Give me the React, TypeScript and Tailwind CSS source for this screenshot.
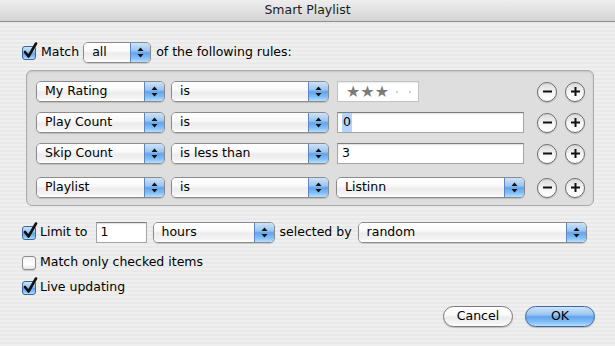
import React from "react";

const whiteGloss =
  "bg-[linear-gradient(to_bottom,#ffffff_0%,#fafafa_40%,#ececec_55%,#f4f4f4_85%,#ffffff_100%)]";
const blueGloss =
  "bg-[linear-gradient(to_bottom,#cde3f9_0%,#9cc6f1_40%,#62a4ec_52%,#83c0f8_80%,#b9e0ff_100%)]";

function Arrows() {
  return (
    <svg width="7" height="11" viewBox="0 0 7 11">
      <path d="M3.5 0.5 L6.5 4 H0.5 Z" fill="#111" />
      <path d="M0.5 7 H6.5 L3.5 10.5 Z" fill="#111" />
    </svg>
  );
}

function Popup({ label, className }: { label: string; className: string }) {
  return (
    <div
      className={`flex h-[21px] shrink-0 overflow-hidden rounded-[5px] border border-[#8b8b8b] shadow-[0_1px_1px_rgba(0,0,0,0.15)] ${className}`}
    >
      <div className={`flex flex-1 items-center pl-[8px] ${whiteGloss}`}>{label}</div>
      <div className={`flex w-[20px] items-center justify-center border-l border-[#5d86c0] ${blueGloss}`}>
        <Arrows />
      </div>
    </div>
  );
}

function Check({ on }: { on?: boolean }) {
  return (
    <div className="relative h-[14px] w-[14px] shrink-0">
      <div
        className={
          on
            ? `h-full w-full rounded-[3px] border border-[#3e64a0] ${blueGloss}`
            : "h-full w-full rounded-[3px] border border-[#8c8c8c] bg-[linear-gradient(to_bottom,#f2f2f2,#ffffff_60%,#e6e6e6)] shadow-[0_1px_1px_rgba(0,0,0,0.15)]"
        }
      />
      {on && (
        <svg className="absolute left-[1px] top-[-4px]" width="15" height="17" viewBox="0 0 15 17">
          <path
            d="M2 10 L5.5 14.5 L13 1.5"
            stroke="#111"
            strokeWidth="2.6"
            fill="none"
            strokeLinecap="round"
            strokeLinejoin="round"
          />
        </svg>
      )}
    </div>
  );
}

function Field({ children, className }: { children?: React.ReactNode; className: string }) {
  return (
    <div
      className={`flex h-[21px] shrink-0 items-center border border-[#a5a5a5] border-t-[#7c7c7c] bg-white pl-[4px] shadow-[inset_0_1px_1px_rgba(0,0,0,0.12)] ${className}`}
    >
      {children}
    </div>
  );
}

function RoundBtn({ plus }: { plus?: boolean }) {
  return (
    <div className="flex h-[20px] w-[20px] shrink-0 items-center justify-center rounded-full border border-[#6d6d6d] bg-[linear-gradient(to_bottom,#d9d9d9_0%,#f5f5f5_50%,#ffffff_100%)] shadow-[0_1px_1px_rgba(0,0,0,0.2)]">
      <svg width="11" height="11" viewBox="0 0 11 11">
        <path d="M1 5.5 H10" stroke="#111" strokeWidth="2" />
        {plus && <path d="M5.5 1 V10" stroke="#111" strokeWidth="2" />}
      </svg>
    </div>
  );
}

function Rule({ field, op, value, className = "" }: { field: string; op: string; value: React.ReactNode; className?: string }) {
  return (
    <div className={`flex h-[21px] items-center ${className}`}>
      <Popup label={field} className="w-[129px]" />
      <Popup label={op} className="ml-[6px] w-[158px]" />
      <div className="ml-[8px] flex w-[188px]">{value}</div>
      <div className="ml-auto flex gap-[8px]">
        <RoundBtn />
        <RoundBtn plus />
      </div>
    </div>
  );
}

export default function App() {
  return (
    <div className="h-[346px] w-[615px] overflow-hidden bg-[repeating-linear-gradient(to_bottom,#efefef_0px,#efefef_2px,#e9e9e9_2px,#e9e9e9_4px)] text-[12.5px] text-black [font-family:'DejaVu_Sans',sans-serif]">
      <div className="flex h-[22px] items-center justify-center border-b border-[#8e8e8e] bg-[linear-gradient(to_bottom,#eeeeee,#d3d3d3)] text-[12.5px] text-[#1c1c1c]">
        Smart Playlist
      </div>

      <div className="pl-[22px] pt-[20px]">
        <div className="flex h-[21px] items-center">
          <Check on />
          <span className="ml-[5px]">Match</span>
          <Popup label="all" className="ml-[4px] w-[68px]" />
          <span className="ml-[5px]">of the following rules:</span>
        </div>

        {/* rules box */}
        <div className="ml-[4px] mt-[7px] w-[568px] rounded-[6px] border border-[#ababab] bg-[#dedede] pb-[7px] pl-[9px] pr-[8px] pt-[10px] shadow-[inset_0_1px_2px_rgba(0,0,0,0.12)]">
          <div className="flex flex-col gap-[10px]">
            <Rule
              field="My Rating"
              op="is"
              value={
                <div className="flex h-[21px] w-[82px] items-center border border-[#c2c2c2] bg-white pl-[8px] shadow-[inset_0_1px_1px_rgba(0,0,0,0.08)]">
                  <span className="text-[16px] leading-none text-[#7a7a7a]">★★★</span>
                  <span className="ml-[7px] h-[2px] w-[2px] rounded-full bg-[#c4c4c4]" />
                  <span className="ml-[11px] h-[2px] w-[2px] rounded-full bg-[#c4c4c4]" />
                </div>
              }
            />
            <Rule
              field="Play Count"
              op="is"
              value={
                <Field className="w-[187px] border-[#6f98cf] shadow-[0_0_0_2px_#92b8e8,0_0_3px_2px_#b6d1f1]">
                  <span className="bg-[#b4d4fd] px-[1px]">0</span>
                </Field>
              }
            />
            <Rule field="Skip Count" op="is less than" value={<Field className="w-[187px]">3</Field>} />
            <Rule
              className="mt-[3px]"
              field="Playlist"
              op="is"
              value={<Popup label="Listinn" className="ml-[-1px] w-[189px]" />}
            />
          </div>
        </div>

        <div className="mt-[16px] flex h-[21px] items-center">
          <Check on />
          <span className="ml-[4px]">Limit to</span>
          <Field className="ml-[8px] w-[51px]">1</Field>
          <Popup label="hours" className="ml-[6px] w-[122px]" />
          <span className="ml-[5px]">selected by</span>
          <Popup label="random" className="ml-[6px] w-[229px]" />
        </div>

        <div className="mt-[9px] flex h-[21px] items-center">
          <Check />
          <span className="ml-[4px]">Match only checked items</span>
        </div>

        <div className="mt-[4px] flex h-[21px] items-center">
          <Check on />
          <span className="ml-[4px]">Live updating</span>
        </div>
      </div>

      <div className="mt-[8px] flex justify-end gap-[12px] pr-[20px]">
        <div
          className={`flex h-[21px] w-[70px] items-center justify-center rounded-full border border-[#7b7b7b] shadow-[0_1px_1px_rgba(0,0,0,0.2)] ${whiteGloss}`}
        >
          Cancel
        </div>
        <div
          className={`flex h-[21px] w-[70px] items-center justify-center rounded-full border border-[#3d66a3] shadow-[0_1px_1px_rgba(0,0,0,0.2)] ${blueGloss}`}
        >
          OK
        </div>
      </div>
    </div>
  );
}
